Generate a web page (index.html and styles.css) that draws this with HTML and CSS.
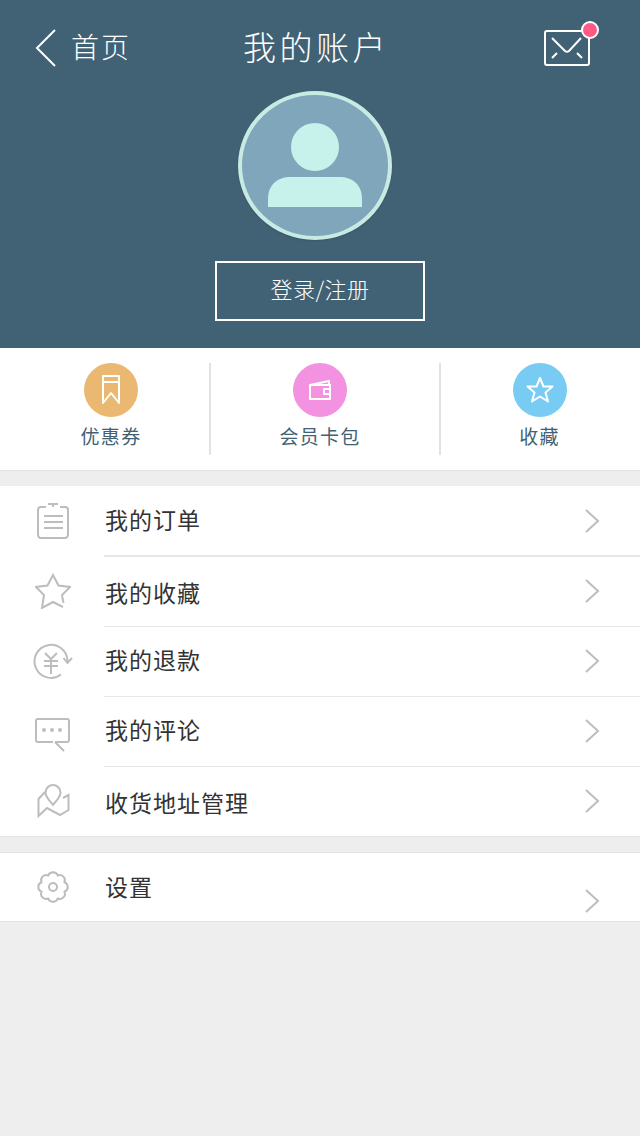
FILE: index.html
```html
<!DOCTYPE html>
<html lang="zh-CN">
<head>
  <meta charset="UTF-8">
  <title>我的账户</title>
  <link rel="stylesheet" href="styles.css">
</head>
<body>
  <header class="account-header">
    <div class="nav">
      <div class="nav-back">
        <svg class="back-arrow" width="22" height="40" viewBox="0 0 22 40"><path d="M20 2 2 20l18 18" fill="none" stroke="#fff" stroke-width="2"/></svg>
        <span>首页</span>
      </div>
      <h1 class="nav-title">我的账户</h1>
      <div class="mail">
        <svg width="46" height="36" viewBox="0 0 46 36" fill="none" stroke="#fff" stroke-width="2"><rect x="1" y="1" width="44" height="34" rx="2"/><path d="M8 8 21 21q2 1.500 4 0L37 8M8 28l5-5M38 28l-5-5"/></svg>
        <span class="mail-dot"></span>
      </div>
    </div>
    <div class="avatar">
      <svg width="96" height="86" viewBox="0 0 96 86" fill="#c7f2eb"><ellipse cx="48" cy="24" rx="24" ry="24"/><path d="M1 84V76C1 62 10 54 24 54H72C86 54 95 62 95 76V84Z"/></svg>
    </div>
    <a class="login-btn">登录/注册</a>
  </header>

  <nav class="tabs">
    <div class="tab tab-coupon">
      <span class="tab-icon icon-orange">
        <svg width="20" height="30" viewBox="0 0 20 30" fill="none" stroke="#fff" stroke-width="2" stroke-linejoin="round"><path d="M2 1H18V28L10 18 2 28ZM2 7H18"/></svg>
      </span>
      <span class="tab-label">优惠券</span>
    </div>
    <div class="tab tab-wallet">
      <span class="tab-icon icon-pink">
        <svg width="24" height="22" viewBox="0 0 24 22" fill="none" stroke="#fff" stroke-width="2"><path d="M2 6 21 2V6M2 6H22V20H2ZM22 10H16V15H22"/></svg>
      </span>
      <span class="tab-label">会员卡包</span>
    </div>
    <div class="tab tab-fav">
      <span class="tab-icon icon-blue">
        <svg width="28" height="28" viewBox="0 0 28 28" fill="none" stroke="#fff" stroke-width="2" stroke-linejoin="round"><path d="M14 2l3.500 8.500H26.500l-7 6 2.500 9-8-5-8 5 2.500-9-7-6H10.500Z"/></svg>
      </span>
      <span class="tab-label">收藏</span>
    </div>
  </nav>

  <ul class="menu">
    <li class="row row-order">
      <span class="row-icon"><svg width="34" height="36" viewBox="0 0 34 36" fill="none" stroke="#bdbdbd" stroke-width="2"><path d="M10 4H5Q2 4 2 7V31Q2 35 5 35H29Q32 35 32 31V7Q32 4 29 4H24M12 1H22M17 1V4M8 13H27M8 19H27M8 25H27"/></svg></span>
      <span class="row-text">我的订单</span>
      <svg class="chev" width="16" height="26" viewBox="0 0 16 26"><path d="M2 2 14 13 2 24" fill="none" stroke="#bdbdbd" stroke-width="2"/></svg>
    </li>
    <li class="row row-star">
      <span class="row-icon"><svg width="36" height="36" viewBox="0 0 36 36" fill="none" stroke="#bdbdbd" stroke-width="2"><path d="M28 34 18 29 7 35 9 22 1 14 12.500 12.500 18 2 23.500 12.500 35 14 27 22 28.500 30"/></svg></span>
      <span class="row-text">我的收藏</span>
      <svg class="chev" width="16" height="26" viewBox="0 0 16 26"><path d="M2 2 14 13 2 24" fill="none" stroke="#bdbdbd" stroke-width="2"/></svg>
    </li>
    <li class="row">
      <span class="row-icon"><svg width="40" height="36" viewBox="0 0 40 36" fill="none" stroke="#bdbdbd" stroke-width="2"><path d="M28 31.500A16.500 16.500 0 1 1 34.500 19M30.500 15l4 5 4.500-5M12 10l6 6 6-6M11 18H25M11 23H25M18 16V31"/></svg></span>
      <span class="row-text">我的退款</span>
      <svg class="chev" width="16" height="26" viewBox="0 0 16 26"><path d="M2 2 14 13 2 24" fill="none" stroke="#bdbdbd" stroke-width="2"/></svg>
    </li>
    <li class="row row-comment">
      <span class="row-icon"><svg width="36" height="34" viewBox="0 0 36 34" fill="none" stroke="#bdbdbd" stroke-width="2"><path d="M18 24H3Q1 24 1 22V3Q1 1 3 1H32Q34 1 34 3V22Q34 24 32 24H20M20 24l9 9"/><g fill="#bdbdbd" stroke="none"><circle cx="9" cy="12" r="2"/><circle cx="17" cy="12" r="2"/><circle cx="25" cy="12" r="2"/></g></svg></span>
      <span class="row-text">我的评论</span>
      <svg class="chev" width="16" height="26" viewBox="0 0 16 26"><path d="M2 2 14 13 2 24" fill="none" stroke="#bdbdbd" stroke-width="2"/></svg>
    </li>
    <li class="row row-address">
      <span class="row-icon"><svg width="34" height="34" viewBox="0 0 34 34" fill="none" stroke="#bdbdbd" stroke-width="2"><path d="M17 21C13 16 9.500 13 9.500 8.500A7.500 7.500 0 0 1 24.500 8.500C24.500 13 21 16 17 21ZM9 8 2.500 15V32L11 24 24 31 32.500 26V11L27 14"/></svg></span>
      <span class="row-text">收货地址管理</span>
      <svg class="chev" width="16" height="26" viewBox="0 0 16 26"><path d="M2 2 14 13 2 24" fill="none" stroke="#bdbdbd" stroke-width="2"/></svg>
    </li>
  </ul>

  <ul class="menu menu-settings">
    <li class="row row-settings">
      <span class="row-icon"><svg width="34" height="34" viewBox="0 0 34 34" fill="none" stroke="#bdbdbd" stroke-width="2"><path d="M12.220 5.450A5.200 5.200 0 0 1 21.780 5.450 5.200 5.200 0 0 1 28.550 12.220 5.200 5.200 0 0 1 28.550 21.780 5.200 5.200 0 0 1 21.780 28.550 5.200 5.200 0 0 1 12.220 28.550 5.200 5.200 0 0 1 5.450 21.780 5.200 5.200 0 0 1 5.450 12.220 5.200 5.200 0 0 1 12.220 5.450Z"/><circle cx="17" cy="17" r="4"/></svg></span>
      <span class="row-text">设置</span>
      <svg class="chev" width="16" height="26" viewBox="0 0 16 26"><path d="M2 2 14 13 2 24" fill="none" stroke="#bdbdbd" stroke-width="2"/></svg>
    </li>
  </ul>
</body>
</html>
```

FILE: styles.css
```css
body {
  margin: 0;
  min-height: 1136px;
  background-color: #eeeeee;
  font-family: "Noto Sans CJK SC", "Noto Sans", sans-serif;
  color: #333;
}

.account-header {
  height: 348px;
  box-sizing: border-box;
  padding-top: 26px;
  background-color: #416274;
  color: #fff;
  display: flex;
  flex-direction: column;
  align-items: center;
}

.nav {
  width: 100%;
  box-sizing: border-box;
  height: 44px;
  padding: 0 50px 0 35px;
  display: flex;
  align-items: center;
}

.nav-back {
  flex: 0 0 208px;
  display: flex;
  align-items: center;
  gap: 14px;
  font-size: 28px;
  letter-spacing: 2px;
  font-weight: 300;
}

.nav-back span { padding-bottom: 4px; }

.nav-title {
  margin: 0;
  padding-bottom: 4px;
  font-size: 33px;
  font-weight: 300;
  letter-spacing: 3.500px;
}

.mail {
  margin-left: auto;
  position: relative;
  height: 36px;
}

.mail-dot {
  position: absolute;
  top: -9px;
  right: -9px;
  width: 14px;
  height: 14px;
  border: 2px solid #fff;
  border-radius: 50%;
  background-color: #ff5a85;
}

.avatar {
  margin-top: 21px;
  margin-left: -10px;
  width: 154px;
  height: 149px;
  box-sizing: border-box;
  border: 4px solid #c7ebe3;
  border-radius: 50%;
  background-color: #7fa6ba;
  display: flex;
  align-items: flex-end;
  justify-content: center;
  padding-bottom: 27px;
  box-shadow: 0 1px 2px rgba(0, 0, 0, 0.12);
}

.login-btn {
  margin-top: 21px;
  width: 210px;
  height: 60px;
  box-sizing: border-box;
  border: 2px solid #fff;
  padding-bottom: 6px;
  display: flex;
  align-items: center;
  justify-content: center;
  font-size: 22px;
  letter-spacing: 0.500px;
  font-weight: 300;
}

.tabs {
  height: 123px;
  box-sizing: border-box;
  background-color: #fff;
  border-bottom: 1px solid #e2e2e2;
  padding-top: 15px;
  display: flex;
  align-items: flex-start;
}

.tab {
  height: 92px;
  box-sizing: border-box;
  display: flex;
  flex-direction: column;
  align-items: center;
}

.tab-coupon { width: 209px; padding-left: 13px; }
.tab-wallet { width: 232px; padding-right: 10px; border-left: 2px solid #e2e2e2; border-right: 2px solid #e2e2e2; }
.tab-fav { width: 197px; }

.tab-icon {
  width: 54px;
  height: 54px;
  border-radius: 50%;
  display: flex;
  align-items: center;
  justify-content: center;
}

.icon-orange { background-color: #ebb871; }
.icon-pink { background-color: #f292e0; }
.icon-blue { background-color: #78ccf3; }

.tab-label {
  margin-top: 5px;
  font-size: 19px;
  letter-spacing: 1.300px;
  color: #416274;
}

.menu {
  list-style: none;
  margin: 15px 0 0;
  padding: 0;
  background-color: #fff;
  border-bottom: 1px solid #e2e2e2;
}

.row {
  height: 70px;
  display: flex;
  align-items: center;
  position: relative;
  box-sizing: border-box;
  padding-right: 40px;
}

.row::after {
  content: "";
  position: absolute;
  left: 104px;
  right: 0;
  bottom: -1px;
  height: 1px;
  background-color: #e8e8e8;
}

.row:last-child::after { display: none; }
.row-order::after { height: 2px; }

.row-icon {
  flex: 0 0 105px;
  box-sizing: border-box;
  padding-left: 1px;
  display: flex;
  justify-content: center;
}

.row-text {
  flex: 1;
  padding-bottom: 4px;
  font-size: 23px;
  letter-spacing: 1px;
}

.row-star .row-text { padding-bottom: 0; padding-top: 1px; }
.row-address .row-text { padding-bottom: 0; padding-top: 2px; }
.row-comment .row-icon { padding-top: 8px; }

.menu-settings {
  border-top: 1px solid #e2e2e2;
}

.row-settings { height: 68px; }
.row-settings .row-text { padding-bottom: 2px; }
.row-settings .chev { margin-top: 28px; }
```
